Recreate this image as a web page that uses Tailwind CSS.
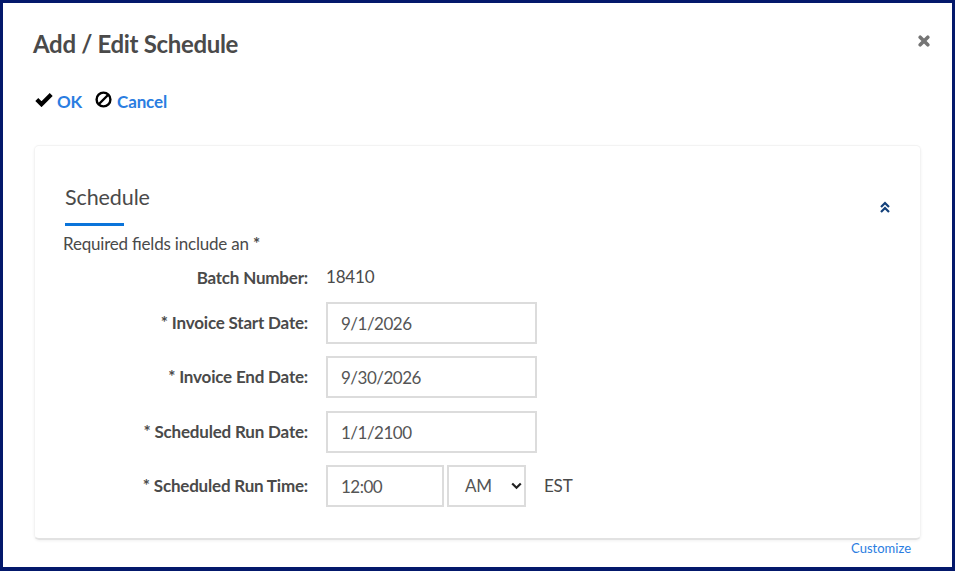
<!DOCTYPE html>
<html><head><meta charset="utf-8"><script src="https://cdn.jsdelivr.net/npm/@tailwindcss/browser@4"></script></head>
<body class="m-0">
<div class="w-[955px] h-[571px] overflow-hidden bg-white border-[3px] border-b-4 border-[#03186b] font-['Lato',sans-serif] text-[#4a4a4a] flex flex-col">
  <div class="flex items-center justify-between pl-[30px] pr-[22px] pt-[30px] h-[52px]">
    <h1 class="text-[24px] leading-[32px] font-bold tracking-[-0.33px] text-[#4a4a4a]">Add / Edit Schedule</h1>
    <svg class="w-[12px] h-[12px] -mt-[6px]" viewBox="0 0 12 12"><path d="M2.2 2.2 L9.8 9.8 M9.8 2.2 L2.2 9.8" stroke="#757575" stroke-width="3.6" stroke-linecap="round"/></svg>
  </div>
  <div class="flex items-center pl-[32px] mt-[35px] h-[24px] text-[17px] font-bold tracking-[-0.15px] text-[#2a7de1]">
    <svg class="w-[18px] h-[15px] -mt-[6px]" viewBox="0 0 18 15"><path d="M1.8 7.5 L6.5 12.2 L16.2 2.5" fill="none" stroke="#000" stroke-width="4.2"/></svg>
    <a class="ml-[4px]">OK</a>
    <svg class="ml-[13px] w-[17px] h-[17px] -mt-[6px]" viewBox="0 0 17 17"><circle cx="8.5" cy="8.5" r="6.9" fill="none" stroke="#000" stroke-width="2.4"/><path d="M4 13 L13 4" stroke="#000" stroke-width="2.4"/></svg>
    <a class="ml-[5px]">Cancel</a>
  </div>
  <div class="mt-[31px] ml-[31px] w-[887px] h-[395px] shrink-0 rounded-[5px] border border-[#f3f3f3] border-b-2 border-b-[#e2e2e2] shadow-[0_1px_3px_rgba(0,0,0,0.06)] relative pt-[37px]">
    <div class="pl-[30px]">
      <h2 class="text-[21.5px] leading-[28px] font-normal tracking-[-0.1px] w-[59px] whitespace-nowrap text-[#4a4a4a]">Schedule</h2>
      <div class="w-[59px] h-[3px] bg-[#0a74da] mt-[12px]"></div>
    </div>
    <svg class="absolute right-[29px] top-[55px] w-[12px] h-[13px]" viewBox="0 0 12 13"><path d="M2 6 L6 2 L10 6 M2 11 L6 7 L10 11" fill="none" stroke="#13407a" stroke-width="2.2"/></svg>
    <div class="text-[17px] tracking-[-0.2px]">
      <p class="pl-[28px] mt-[7px] leading-[22px] [font-feature-settings:'liga'_1]">Required fields include an <b>*</b></p>
      <div class="grid grid-cols-[273px_1fr] gap-x-[18px] items-center mt-[11px]">
        <div class="text-right font-bold h-[22px] leading-[24px]">Batch Number:</div>
        <div class="h-[22px] leading-[22px]">18410</div>
        <div class="text-right font-bold mt-[14px]">* Invoice Start Date:</div>
        <input class="mt-[14px] w-[211px] h-[42px] border-2 border-[#dcdcdc] pl-[13px] text-[17px] tracking-[-0.5px] text-[#555]" value="9/1/2026">
        <div class="text-right font-bold mt-[12px]">* Invoice End Date:</div>
        <input class="mt-[12px] w-[211px] h-[42px] border-2 border-[#dcdcdc] pl-[13px] text-[17px] tracking-[-0.5px] text-[#555]" value="9/30/2026">
        <div class="text-right font-bold mt-[13px]">* Scheduled Run Date:</div>
        <input class="mt-[13px] w-[211px] h-[42px] border-2 border-[#dcdcdc] pl-[13px] text-[17px] tracking-[-0.5px] text-[#555]" value="1/1/2100">
        <div class="text-right font-bold mt-[12px]">* Scheduled Run Time:</div>
        <div class="mt-[12px] flex items-center">
          <input class="w-[118px] h-[42px] border-2 border-[#dcdcdc] pl-[13px] text-[17px] tracking-[-0.5px] text-[#555]" value="12:00">
          <div class="ml-[3px] w-[79px] h-[42px] border-2 border-[#dcdcdc] flex items-center justify-between pl-[16px] pr-[2px] text-[#555]">
            <span>AM</span>
            <svg class="w-[11px] h-[8px]" viewBox="0 0 11 8"><path d="M1.2 1.5 L5.5 5.8 L9.8 1.5" fill="none" stroke="#222" stroke-width="2.2"/></svg>
          </div>
          <span class="ml-[18px]">EST</span>
        </div>
      </div>
    </div>
  </div>
  <div class="text-right pr-[41px] mt-0 text-[13px] leading-[17px] text-[#2a7de1]">Customize</div>
</div>
</body></html>
